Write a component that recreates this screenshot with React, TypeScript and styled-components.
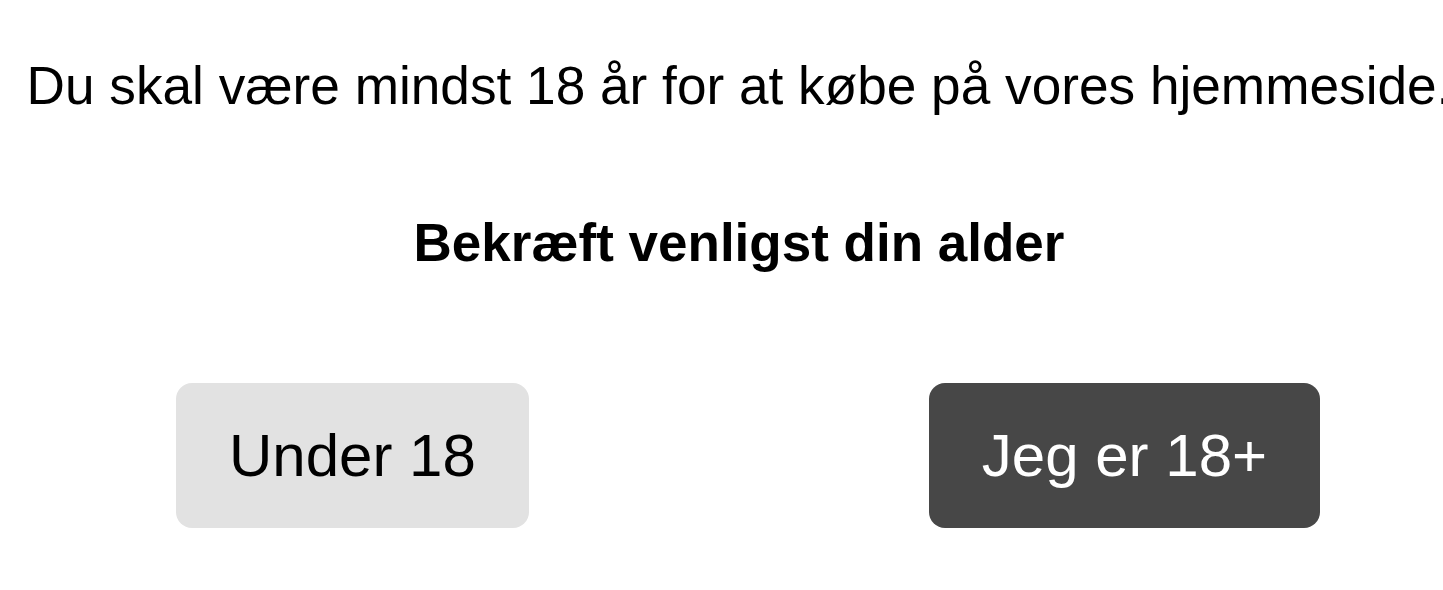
import React from "react";
import styled, { createGlobalStyle } from "styled-components";

const GlobalStyle = createGlobalStyle`
  html, body {
    margin: 0;
    padding: 0;
    background: #fff;
    overflow: hidden;
  }
  body {
    font-family: "Liberation Sans", Arial, sans-serif;
    color: #000;
  }
`;

export default function App() {
  return (
    <>
      <GlobalStyle />
      <AgeGate>
        <Notice>Du skal være mindst 18 år for at købe på vores hjemmeside.</Notice>
        <Title>Bekræft venligst din alder</Title>
        <Actions>
          <AgeButton>Under 18</AgeButton>
          <AgeButton primary>Jeg er 18+</AgeButton>
        </Actions>
      </AgeGate>
    </>
  );
}

/**
 * styles
 */
const AgeGate = styled.div`
  width: 1478px;
  height: 590px;
  display: flex;
  flex-direction: column;
  align-items: center;
  padding-top: 55px;
  box-sizing: border-box;
`;

const Notice = styled.p`
  margin: 0;
  font-size: 53.2px;
  line-height: 61px;
  white-space: nowrap;
`;

const Title = styled.h2`
  margin: 96px 0 0;
  font-size: 53px;
  line-height: 62px;
  font-weight: 700;
`;

const Actions = styled.div`
  align-self: flex-start;
  margin-top: 109px;
  padding-left: 176px;
  display: flex;
  gap: 400px;
`;

const AgeButton = styled.button<{ primary?: boolean }>`
  font-family: "Liberation Sans", Arial, sans-serif;
  font-size: 60px;
  line-height: 70px;
  padding: 37.5px 53px;
  border: none;
  border-radius: 16px;
  cursor: pointer;
  background: ${({ primary }) => (primary ? "#474747" : "#e2e2e2")};
  color: ${({ primary }) => (primary ? "#fff" : "#000")};
`;
